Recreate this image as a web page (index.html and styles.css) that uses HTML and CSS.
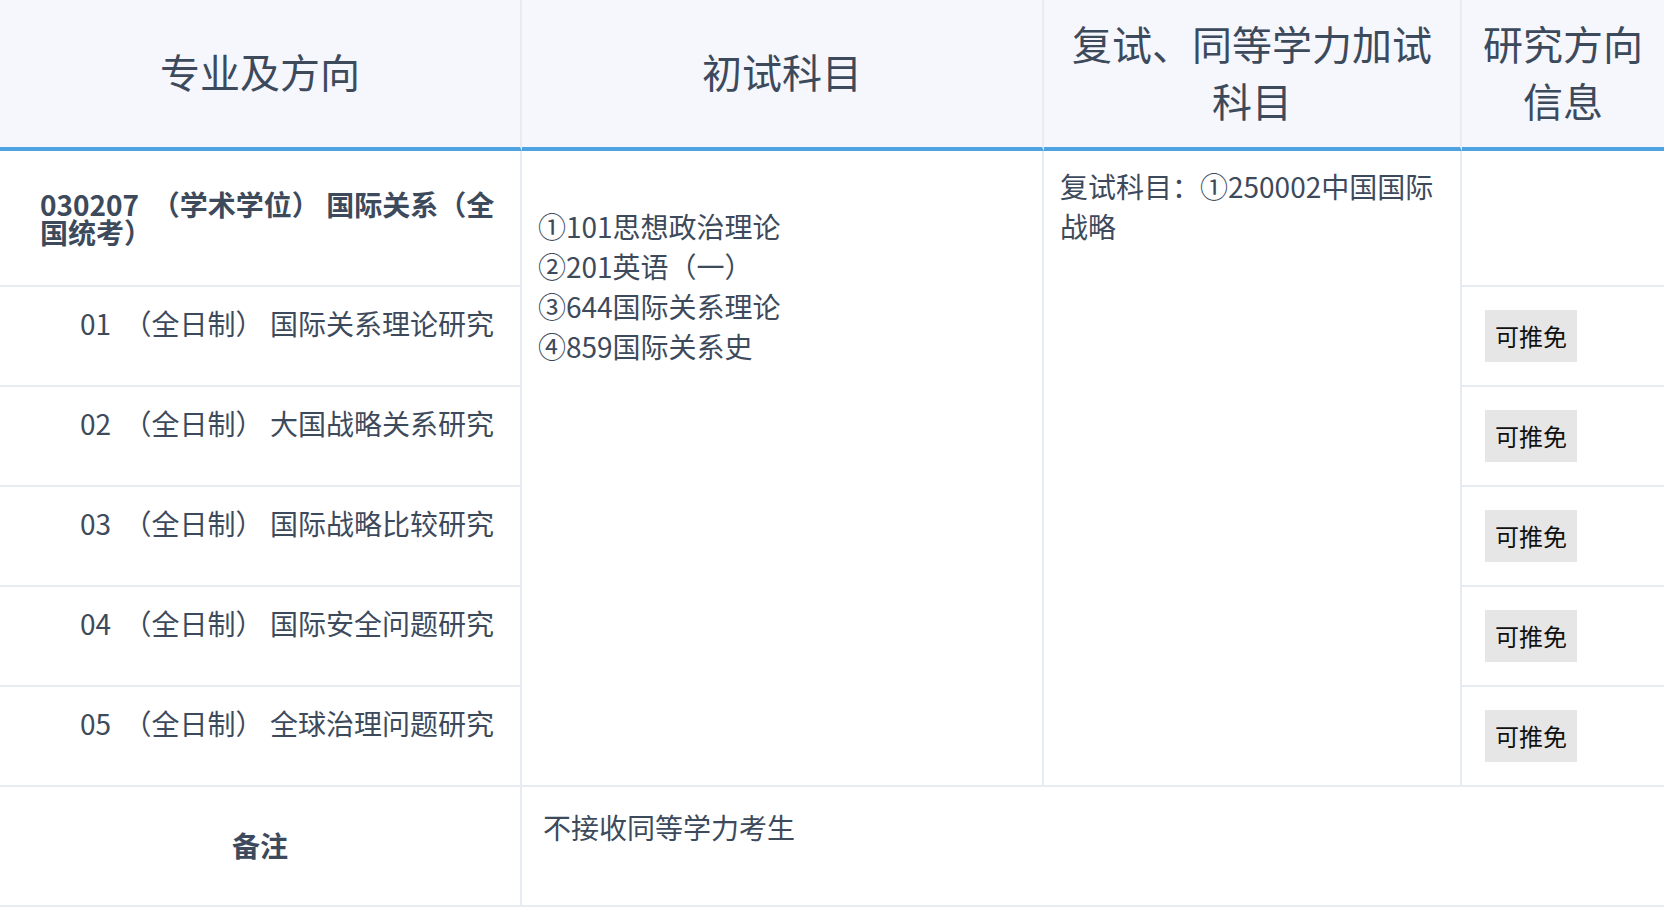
FILE: index.html
```html
<!DOCTYPE html>
<html lang="zh-CN">
<head>
<meta charset="utf-8">
<title>专业目录</title>
<link rel="stylesheet" href="styles.css">
</head>
<body>
<div class="plan">
  <div class="cell head">专业及方向</div>
  <div class="cell head">初试科目</div>
  <div class="cell head">复试、同等学力加试科目</div>
  <div class="cell head last">研究方向信息</div>

  <div class="cell major">030207&nbsp; （学术学位） 国际关系（全国统考）</div>
  <div class="cell exam span-rows">①101思想政治理论<br>②201英语（一）<br>③644国际关系理论<br>④859国际关系史</div>
  <div class="cell retest span-rows">复试科目：①250002中国国际战略</div>
  <div class="cell last"></div>

  <div class="cell dir">01&nbsp; （全日制） 国际关系理论研究</div>
  <div class="cell last tag-cell"><span class="tag">可推免</span></div>

  <div class="cell dir">02&nbsp; （全日制） 大国战略关系研究</div>
  <div class="cell last tag-cell"><span class="tag">可推免</span></div>

  <div class="cell dir">03&nbsp; （全日制） 国际战略比较研究</div>
  <div class="cell last tag-cell"><span class="tag">可推免</span></div>

  <div class="cell dir">04&nbsp; （全日制） 国际安全问题研究</div>
  <div class="cell last tag-cell"><span class="tag">可推免</span></div>

  <div class="cell dir">05&nbsp; （全日制） 全球治理问题研究</div>
  <div class="cell last tag-cell"><span class="tag">可推免</span></div>

  <div class="cell note-label">备注</div>
  <div class="cell note span-cols last">不接收同等学力考生</div>
</div>
</body>
</html>
```

FILE: styles.css
```css
* {
  box-sizing: border-box;
}

body {
  margin: 0;
  background: #ffffff;
  font-family: "Noto Sans CJK SC", "Noto Sans", sans-serif;
  color: #3d4a5c;
}

.plan {
  display: grid;
  grid-template-columns: 522px 522px 418px 202px;
  grid-template-rows: 151px 136px repeat(5, 100px) 120px;
}

.cell {
  border-right: 2px solid #e6ecf2;
  border-bottom: 2px solid #e6ecf2;
  padding: 16px;
  font-size: 28px;
  line-height: 40px;
}

.cell.last {
  border-right: 0;
}

.span-rows {
  grid-row: span 6;
}

.span-cols {
  grid-column: span 3;
}

.head {
  background: #f5f7fc;
  border-bottom: 4px solid #4fa3e0;
  padding: 14px 16px 18px;
  font-size: 40px;
  line-height: 57px;
  display: flex;
  align-items: center;
  justify-content: center;
  text-align: center;
}

.major {
  font-weight: 700;
  line-height: 28px;
  display: flex;
  align-items: center;
  padding: 0 10px 0 40px;
}

.dir {
  padding: 16px 0 16px 80px;
  white-space: nowrap;
}

.exam {
  padding-top: 55px;
}

.retest {
  padding-top: 15px;
}

.tag-cell {
  display: flex;
  align-items: center;
  padding-left: 23px;
}

.tag {
  background: #e6e6e6;
  color: #111111;
  font-size: 24px;
  line-height: 34px;
  padding: 9px 10px;
}

.note-label {
  font-weight: 700;
  display: flex;
  align-items: center;
  justify-content: center;
  padding-bottom: 18px;
}

.note {
  padding: 20px 21px;
}
```
